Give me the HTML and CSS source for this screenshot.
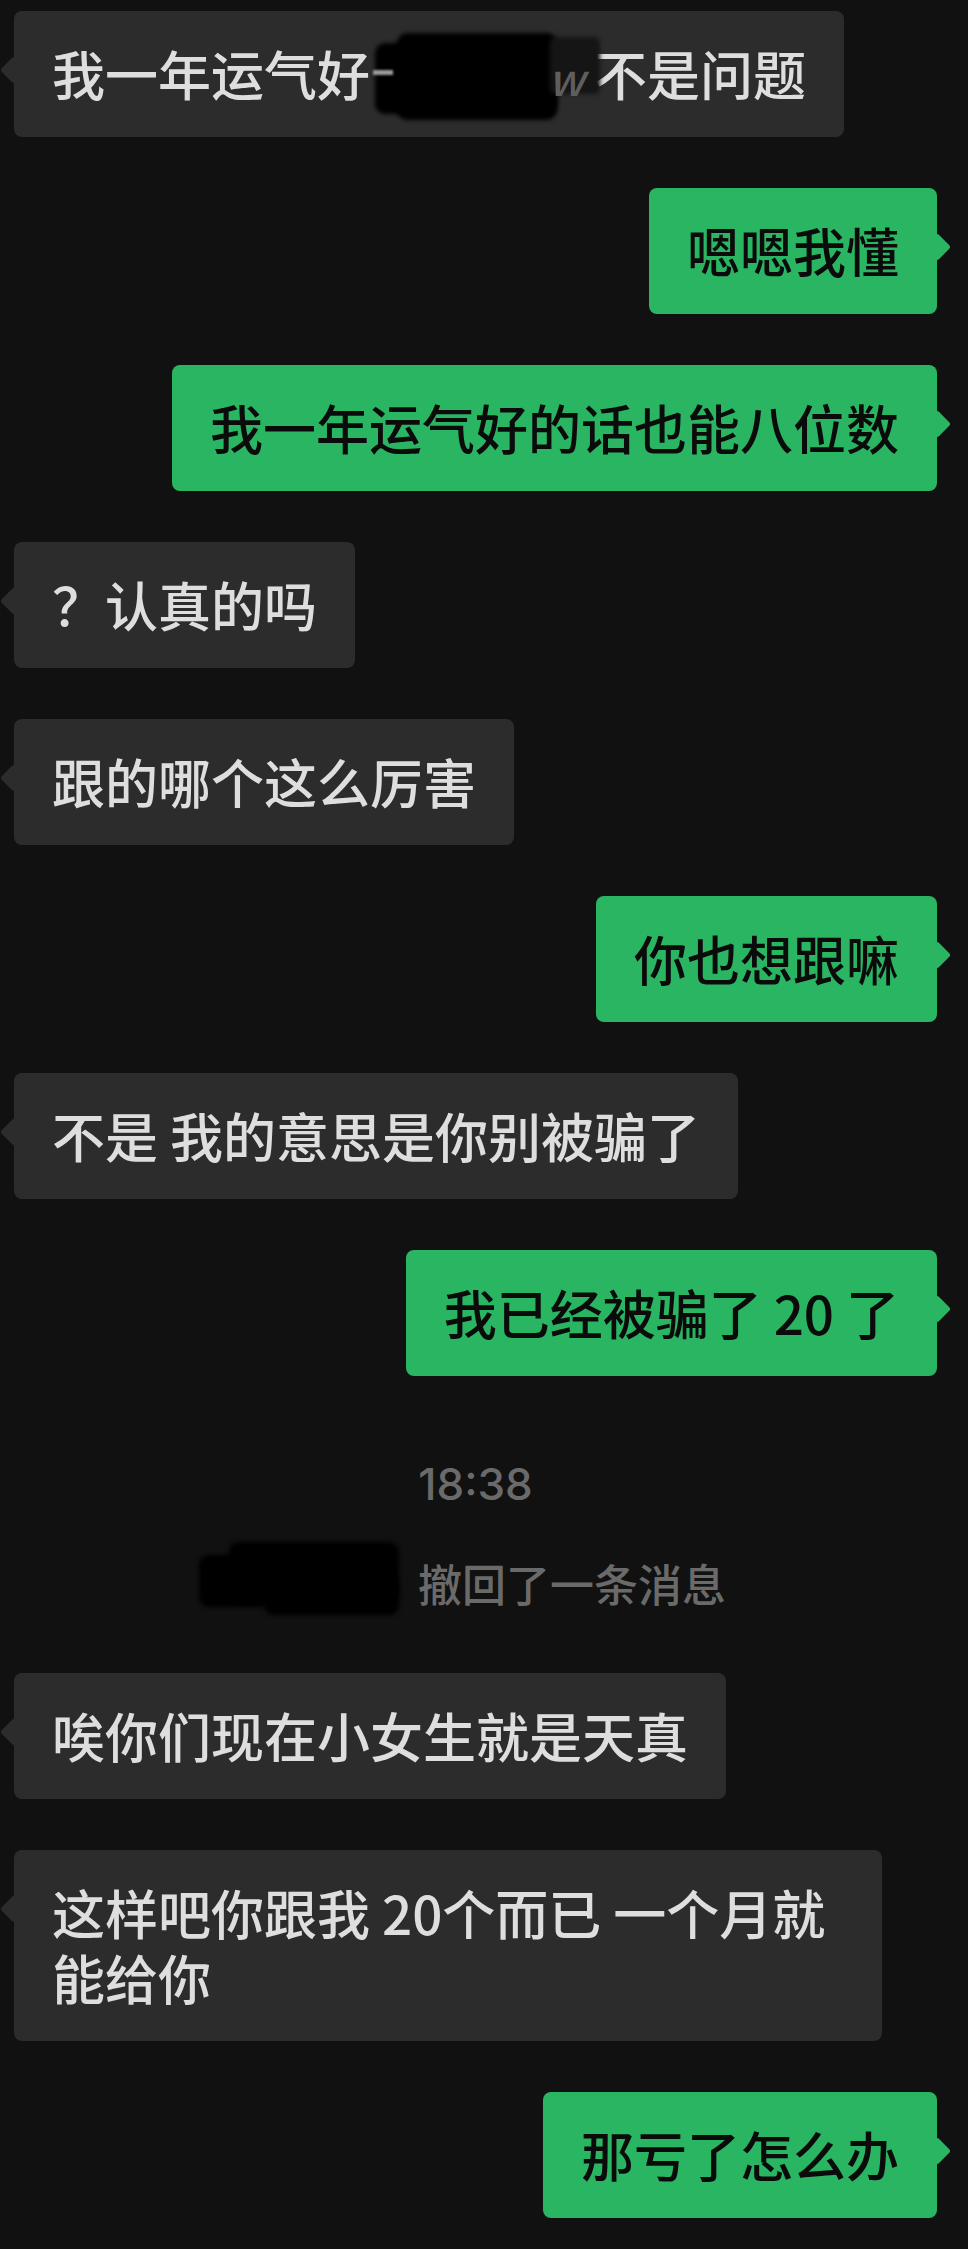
FILE: index.html
```html
<!DOCTYPE html>
<html>

<head>
  <meta charset="utf-8">
  <title>聊天记录</title>
  <link rel="stylesheet" href="styles.css">
</head>

<body>
  <div class="chat">
    <div class="row in">
      <div class="bubble">我一年运气好<span class="hidden-amount">
          <span class="blot blot-a"></span>
          <span class="blot blot-b"></span>
          <span class="blot blot-c"></span>
          <span class="peek-dash"></span>
          <span class="peek-w">w</span>
        </span>不是问题</div>
    </div>

    <div class="row out">
      <div class="bubble">嗯嗯我懂</div>
    </div>

    <div class="row out">
      <div class="bubble">我一年运气好的话也能八位数</div>
    </div>

    <div class="row in">
      <div class="bubble">？认真的吗</div>
    </div>

    <div class="row in">
      <div class="bubble">跟的哪个这么厉害</div>
    </div>

    <div class="row out">
      <div class="bubble">你也想跟嘛</div>
    </div>

    <div class="row in">
      <div class="bubble">不是 我的意思是你别被骗了</div>
    </div>

    <div class="row out">
      <div class="bubble">我已经被骗了 20 了</div>
    </div>

    <!-- 系统提示 -->
    <div class="system">
      <div class="time">18:38</div>
      <div class="notice"><span class="hidden-name">
          <span class="blot name-a"></span>
          <span class="blot name-b"></span>
          <span class="blot name-c"></span>
        </span>撤回了一条消息</div>
    </div>

    <div class="row in">
      <div class="bubble">唉你们现在小女生就是天真</div>
    </div>

    <div class="row in">
      <div class="bubble">这样吧你跟我 20个而已 一个月就能给你</div>
    </div>

    <div class="row out">
      <div class="bubble">那亏了怎么办</div>
    </div>
  </div>
</body>

</html>
```

FILE: styles.css
```css
html,
body {
  margin: 0;
  background-color: #111111;
}

body {
  font-family: "Noto Sans CJK SC", "Noto Sans", sans-serif;
}

/* Lista de mensajes */
.chat {
  display: flex;
  flex-direction: column;
  gap: 51px;
  padding: 11px 31px 40px 14px;
}

.row {
  display: flex;
}

.row.out {
  justify-content: flex-end;
}

.bubble {
  position: relative;
  max-width: 868px;
  box-sizing: border-box;
  padding: 30px 38px 31px;
  border-radius: 8px;
  font-size: 53px;
  font-weight: 500;
  line-height: 65px;
}

.bubble::before {
  content: "";
  position: absolute;
  top: 49px;
  width: 20px;
  height: 20px;
  border-radius: 3px;
  transform: rotate(45deg);
}

.in .bubble,
.in .bubble::before {
  background-color: #2c2c2c;
  color: #dedede;
}

.in .bubble::before {
  left: -10px;
}

.out .bubble,
.out .bubble::before {
  background-color: #2ab563;
  color: #0b0b0b;
}

.out .bubble::before {
  right: -10px;
}

/* Partes tapadas */
.hidden-amount,
.hidden-name {
  position: relative;
  display: inline-block;
  vertical-align: top;
}

.hidden-amount {
  width: 224px;
  height: 65px;
}

.blot {
  position: absolute;
  background-color: #000;
  border-radius: 10px;
  filter: blur(2px);
}

.blot-a {
  left: 5px;
  top: 2px;
  width: 182px;
  height: 71px;
}

.blot-b {
  left: 27px;
  top: -8px;
  width: 160px;
  height: 87px;
}

.blot-c {
  left: 180px;
  top: -4px;
  width: 50px;
  height: 57px;
  background-color: #151515;
  border-radius: 6px;
}

.peek-dash {
  position: absolute;
  left: 3px;
  top: 29px;
  width: 20px;
  height: 5px;
  background-color: #9a9a9a;
  filter: blur(1px);
}

.peek-w {
  position: absolute;
  left: 178px;
  top: 14px;
  font-size: 44px;
  line-height: 44px;
  font-style: italic;
  color: #5e5e5e;
}

/* Hora y aviso */
.system {
  margin-bottom: 7px;
  text-align: center;
  color: #6a6a6a;
}

.time {
  margin-top: 31px;
  font-family: Inter, "Noto Sans", sans-serif;
  font-size: 44px;
  font-weight: 500;
  line-height: 53px;
}

.notice {
  margin-top: 40px;
  padding-right: 26px;
  font-size: 44px;
  font-weight: 500;
  line-height: 64px;
}

.hidden-name {
  width: 200px;
  height: 64px;
  margin-right: 19px;
}

.name-a {
  left: 0;
  top: 4px;
  width: 70px;
  height: 52px;
}

.name-b {
  left: 30px;
  top: -9px;
  width: 170px;
  height: 60px;
}

.name-c {
  left: 65px;
  top: 26px;
  width: 135px;
  height: 38px;
}
```
